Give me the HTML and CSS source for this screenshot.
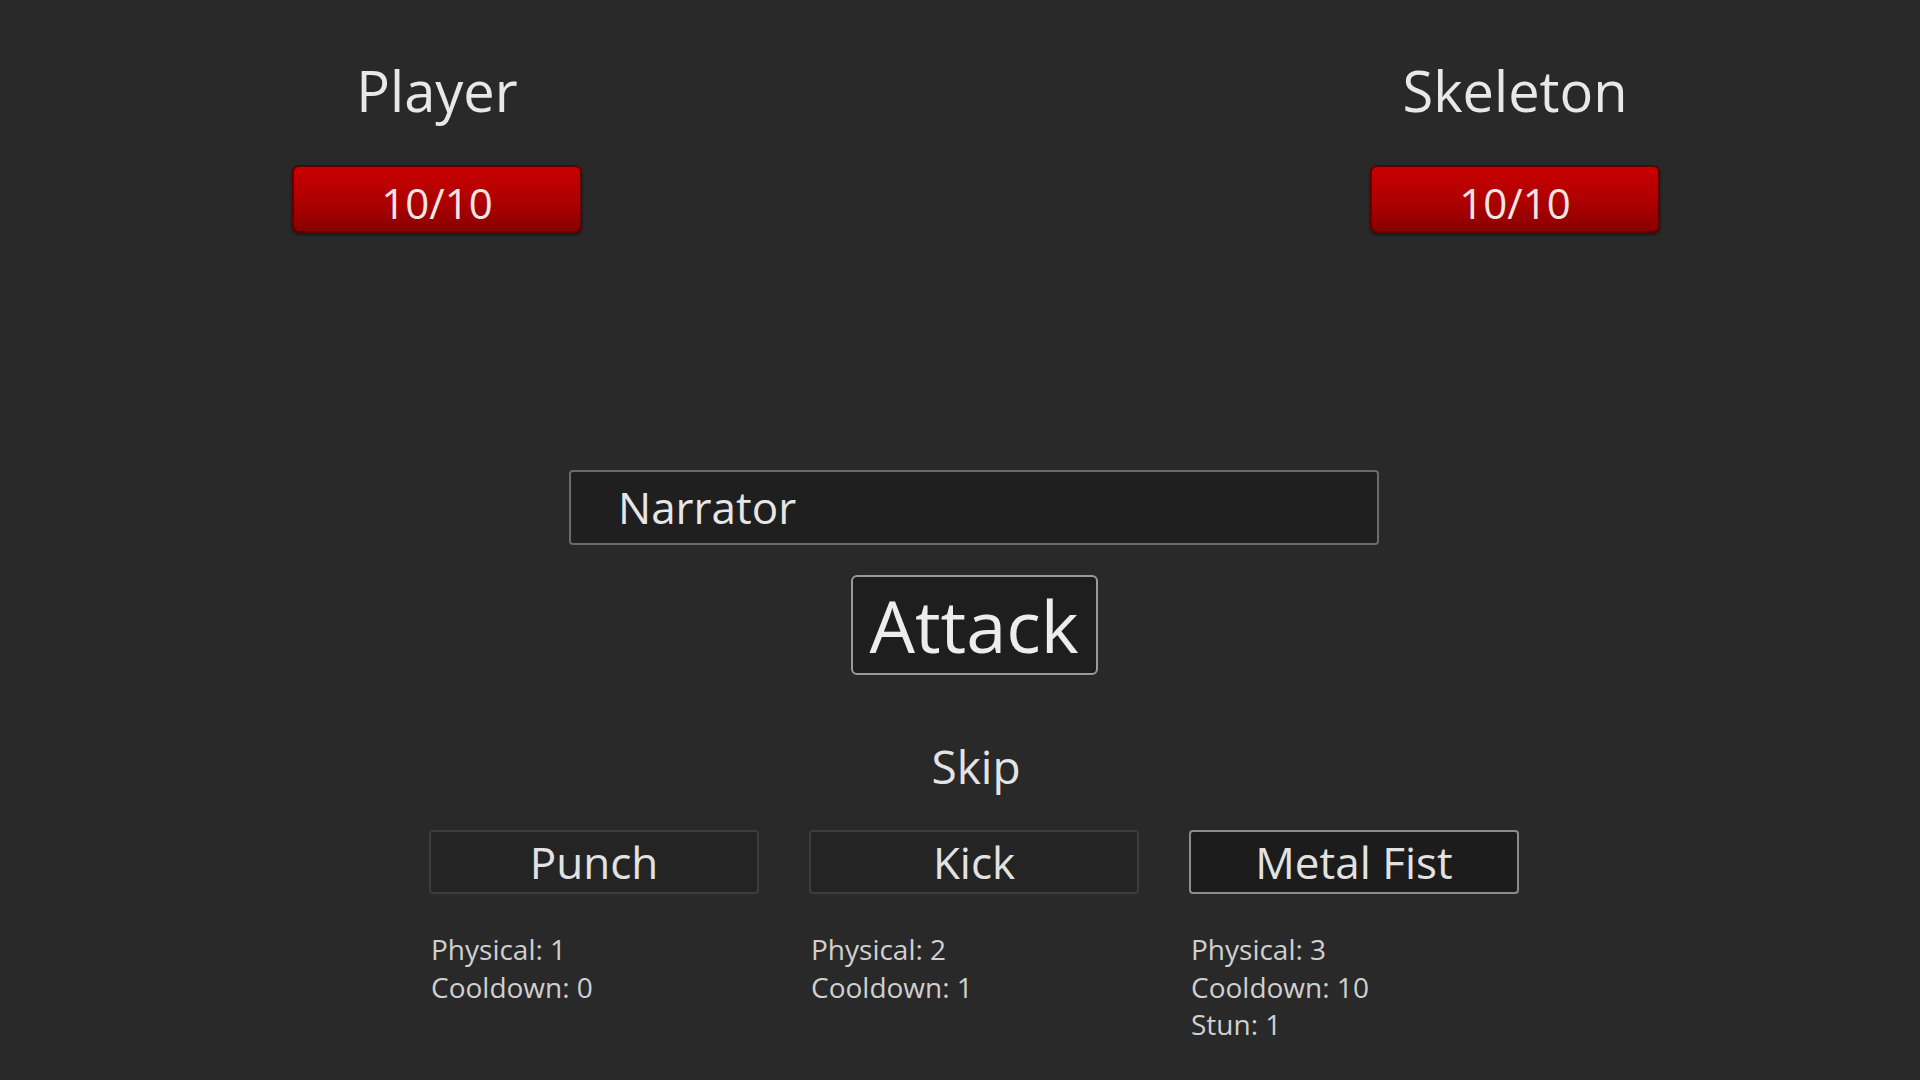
FILE: index.html
```html
<!DOCTYPE html>
<html lang="en">
<head>
<meta charset="utf-8">
<title>Battle</title>
<link rel="stylesheet" href="styles.css">
</head>
<body>
<div class="screen">
  <header class="combatants">
    <div class="fighter">
      <div class="fighter-name">Player</div>
      <div class="health">10/10</div>
    </div>
    <div class="fighter">
      <div class="fighter-name">Skeleton</div>
      <div class="health">10/10</div>
    </div>
  </header>

  <main class="controls">
    <div class="narrator">Narrator</div>
    <button class="attack">Attack</button>
    <div class="skip">Skip</div>
    <div class="moves">
      <div class="move">
        <button class="move-btn">Punch</button>
        <div class="move-stats">
          <div>Physical: 1</div>
          <div>Cooldown: 0</div>
        </div>
      </div>
      <div class="move">
        <button class="move-btn">Kick</button>
        <div class="move-stats">
          <div>Physical: 2</div>
          <div>Cooldown: 1</div>
        </div>
      </div>
      <div class="move">
        <button class="move-btn selected">Metal Fist</button>
        <div class="move-stats">
          <div>Physical: 3</div>
          <div>Cooldown: 10</div>
          <div>Stun: 1</div>
        </div>
      </div>
    </div>
  </main>
</div>
</body>
</html>
```

FILE: styles.css
```css
* { box-sizing: border-box; }
html, body {
  margin: 0;
  padding: 0;
  width: 1920px;
  height: 1080px;
  background: #292929;
  overflow: hidden;
}
body {
  font-family: "Open Sans", "Noto Sans", sans-serif;
  color: #e4e4e4;
}
.screen {
  display: flex;
  flex-direction: column;
  height: 100%;
}
.combatants {
  display: flex;
  justify-content: space-between;
  padding: 52px 260px 0 292px;
}
.fighter {
  display: flex;
  flex-direction: column;
  align-items: center;
  width: 290px;
}
.fighter-name {
  font-size: 56px;
  line-height: 76px;
  color: #e8e8e8;
  white-space: nowrap;
}
.health {
  margin-top: 37px;
  width: 290px;
  height: 68px;
  border-radius: 7px;
  border: 2px solid #5c0000;
  background: linear-gradient(to bottom, #c80000 0%, #b00000 50%, #8a0000 100%);
  box-shadow: 0 2px 3px rgba(0,0,0,0.45);
  color: #f2e6e6;
  font-size: 42px;
  line-height: 64px;
  text-align: center;
  padding-top: 4px;
}
.controls {
  display: flex;
  flex-direction: column;
  align-items: center;
  padding-left: 28px;
  margin-top: 237px;
}
.narrator {
  width: 810px;
  height: 75px;
  background: #1f1f1f;
  border: 2px solid #6a6a6a;
  border-radius: 4px;
  font-size: 44px;
  line-height: 71px;
  padding-left: 47px;
  color: #e6e6e6;
}
.attack {
  margin-top: 30px;
  width: 247px;
  height: 100px;
  background: #1e1e1e;
  border: 2px solid #9a9a9a;
  border-radius: 6px;
  color: #ededed;
  font-family: inherit;
  font-size: 72px;
  line-height: 94px;
  padding: 0;
}
.skip {
  margin-top: 60px;
  font-size: 46px;
  line-height: 63px;
  color: #e4e4e4;
  padding-left: 4px;
}
.moves {
  margin-top: 32px;
  display: flex;
  gap: 50px;
}
.move {
  width: 330px;
  display: flex;
  flex-direction: column;
}
.move-btn {
  height: 64px;
  width: 330px;
  background: #242424;
  border: 2px solid #3d3d3d;
  border-radius: 4px;
  color: #e2e2e2;
  font-family: inherit;
  font-size: 44px;
  line-height: 58px;
  padding: 0;
}
.move-btn.selected {
  background: #1c1c1c;
  border-color: #8c8c8c;
}
.move-stats {
  margin-top: 37px;
  padding-left: 2px;
  font-size: 28px;
  line-height: 37.5px;
  color: #d0d0d0;
}
```
